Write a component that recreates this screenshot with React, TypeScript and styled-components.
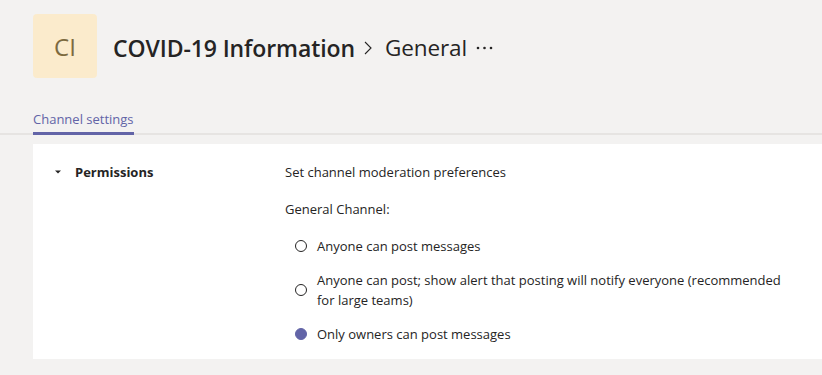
import React from "react";
import styled, { createGlobalStyle } from "styled-components";

const Global = createGlobalStyle`
  html, body { margin: 0; padding: 0; background: #f3f2f1; }
  body { font-family: "Open Sans", "Noto Sans", sans-serif; color: #252424; }
`;

const Page = styled.div`
  width: 822px;
  height: 375px;
  overflow: hidden;
  background: #f3f2f1;
  padding-top: 14px;
  box-sizing: border-box;
`;

const Header = styled.div`
  display: flex;
  align-items: center;
  padding-left: 33px;
  height: 64px;
`;

const Avatar = styled.div`
  width: 64px;
  height: 64px;
  border-radius: 4px;
  background: #fbebcc;
  color: #7d6a3f;
  font-size: 24px;
  font-weight: 400;
  display: flex;
  align-items: center;
  justify-content: center;
  margin-right: 16px;
`;

const Crumbs = styled.div`
  display: flex;
  align-items: center;
  padding-top: 3px;
`;

const Title = styled.h1`
  margin: 0;
  font-size: 23px;
  font-weight: 600;
  color: #252424;
  letter-spacing: -0.1px;
`;

const Chevron = styled.span`
  margin: 0 13px 0 9px;
  display: flex;
  align-items: center;
`;

const Sub = styled.span`
  font-size: 22.5px;
  font-weight: 400;
  color: #252424;
  letter-spacing: -0.1px;
`;

const More = styled.span`
  margin-left: 9px;
  display: flex;
  align-items: center;
`;

const TabBar = styled.div`
  margin-top: 32px;
  padding-left: 33px;
  border-bottom: 2px solid #e6e4e2;
  display: flex;
`;

const Tab = styled.div<{ $active?: boolean }>`
  font-size: 13px;
  color: ${(p) => (p.$active ? "#6264a7" : "#252424")};
  padding-bottom: 3px;
  border-bottom: 3px solid ${(p) => (p.$active ? "#6264a7" : "transparent")};
  margin-bottom: -2px;
  line-height: 19px;
`;

const Card = styled.div`
  margin: 9px 0 0 33px;
  background: #ffffff;
  height: 215px;
  display: grid;
  grid-template-columns: 252px 1fr;
  padding-top: 18px;
  box-sizing: border-box;
`;

const SectionHead = styled.div`
  display: flex;
  align-items: center;
  align-self: start;
  padding-left: 22px;
  font-size: 13px;
  font-weight: 700;
  line-height: 20px;
`;

const Caret = styled.span`
  width: 6px;
  margin-right: 14px;
  display: flex;
`;

const Content = styled.div`
  display: flex;
  flex-direction: column;
  font-size: 13px;
  line-height: 20px;
  padding-right: 20px;
`;

const Text = styled.div<{ $mb: number }>`
  margin-bottom: ${(p) => p.$mb}px;
`;

const Options = styled.div`
  display: flex;
  flex-direction: column;
  gap: 14px;
  padding-left: 10px;
  padding-top: 2px;
`;

const Option = styled.label`
  display: flex;
  align-items: center;
  gap: 10px;
`;

const OptionText = styled.span`
  max-width: 482px;
`;

const Radio = styled.span<{ $checked?: boolean }>`
  flex: none;
  width: 12px;
  height: 12px;
  border-radius: 50%;
  box-sizing: border-box;
  border: 1px solid ${(p) => (p.$checked ? "#6264a7" : "#252424")};
  background: ${(p) => (p.$checked ? "#6264a7" : "transparent")};
`;

const options = [
  { label: "Anyone can post messages", checked: false },
  {
    label:
      "Anyone can post; show alert that posting will notify everyone (recommended for large teams)",
    checked: false,
  },
  { label: "Only owners can post messages", checked: true },
];

export default function App() {
  return (
    <>
      <Global />
      <Page>
        <Header>
          <Avatar>CI</Avatar>
          <Crumbs>
            <Title>COVID-19 Information</Title>
            <Chevron>
              <svg width="8" height="14" viewBox="0 0 8 14">
                <path d="M1 1l6 6-6 6" fill="none" stroke="#252424" strokeWidth="1.1" />
              </svg>
            </Chevron>
            <Sub>General</Sub>
            <More>
              <svg width="17" height="4" viewBox="0 0 17 4">
                <circle cx="2" cy="2" r="1.3" fill="#252424" />
                <circle cx="8.5" cy="2" r="1.3" fill="#252424" />
                <circle cx="15" cy="2" r="1.3" fill="#252424" />
              </svg>
            </More>
          </Crumbs>
        </Header>
        <TabBar>
          <Tab $active>Channel settings</Tab>
        </TabBar>
        <Card>
          <SectionHead>
            <Caret>
              <svg width="6" height="4" viewBox="0 0 6 4">
                <path d="M0 0.5h6L3 3.5z" fill="#252424" />
              </svg>
            </Caret>
            Permissions
          </SectionHead>
          <Content>
            <Text $mb={17}>Set channel moderation preferences</Text>
            <Text $mb={15}>General Channel:</Text>
            <Options>
              {options.map((o) => (
                <Option key={o.label}>
                  <Radio $checked={o.checked} />
                  <OptionText>{o.label}</OptionText>
                </Option>
              ))}
            </Options>
          </Content>
        </Card>
      </Page>
    </>
  );
}
